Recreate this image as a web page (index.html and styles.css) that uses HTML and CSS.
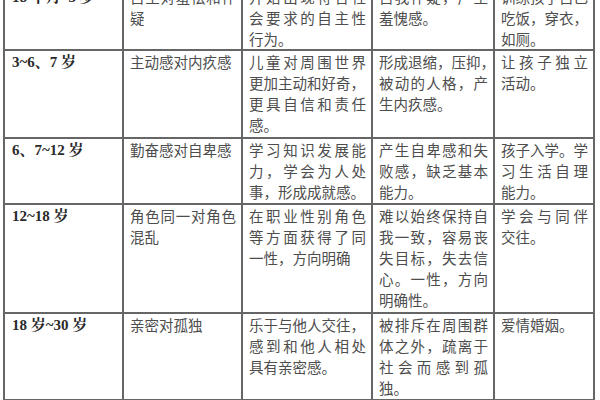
FILE: index.html
```html
<!DOCTYPE html>
<html lang="zh">
<head>
<meta charset="utf-8">
<link rel="stylesheet" href="styles.css">
</head>
<body>
<div class="page">
<table class="stages">
<colgroup>
<col class="c1"><col class="c2"><col class="c3"><col class="c4"><col class="c5">
</colgroup>
<tr class="r1">
<td class="age">18 个月~3 岁</td>
<td><span class="l j">自主对羞怯和怀</span><span class="l">疑</span></td>
<td><span class="l j">开始出现符合社</span><span class="l j">会要求的自主性</span><span class="l">行为。</span></td>
<td><span class="l j">自我怀疑，产生</span><span class="l">羞愧感。</span></td>
<td><span class="l j">训练孩子自己</span><span class="l">吃饭，穿衣，</span><span class="l">如厕。</span></td>
</tr>
<tr class="r2">
<td class="age">3~6、7 岁</td>
<td><span class="l">主动感对内疚感</span></td>
<td><span class="l j">儿童对周围世界</span><span class="l">更加主动和好奇，</span><span class="l j">更具自信和责任</span><span class="l">感。</span></td>
<td><span class="l">形成退缩，压抑，</span><span class="l j">被动的人格，产</span><span class="l">生内疚感。</span></td>
<td><span class="l j">让孩子独立</span><span class="l">活动。</span></td>
</tr>
<tr class="r3">
<td class="age">6、7~12 岁</td>
<td><span class="l">勤奋感对自卑感</span></td>
<td><span class="l j">学习知识发展能</span><span class="l j">力，学会为人处</span><span class="l">事，形成成就感。</span></td>
<td><span class="l j">产生自卑感和失</span><span class="l j">败感，缺乏基本</span><span class="l">能力。</span></td>
<td><span class="l j">孩子入学。学</span><span class="l j">习生活自理</span><span class="l">能力。</span></td>
</tr>
<tr class="r4">
<td class="age">12~18 岁</td>
<td><span class="l j">角色同一对角色</span><span class="l">混乱</span></td>
<td><span class="l j">在职业性别角色</span><span class="l j">等方面获得了同</span><span class="l">一性，方向明确</span></td>
<td><span class="l j">难以始终保持自</span><span class="l j">我一致，容易丧</span><span class="l j">失目标，失去信</span><span class="l j">心。一性，方向</span><span class="l">明确性。</span></td>
<td><span class="l j">学会与同伴</span><span class="l">交往。</span></td>
</tr>
<tr class="r5">
<td class="age">18 岁~30 岁</td>
<td><span class="l">亲密对孤独</span></td>
<td><span class="l">乐于与他人交往，</span><span class="l j">感到和他人相处</span><span class="l">具有亲密感。</span></td>
<td><span class="l j">被排斥在周围群</span><span class="l j">体之外，疏离于</span><span class="l j">社会而感到孤</span><span class="l">独。</span></td>
<td><span class="l">爱情婚姻。</span></td>
</tr>
</table>
</div>
</body>
</html>
```

FILE: styles.css
```css
html, body {
  margin: 0;
  padding: 0;
  background: #ffffff;
}
body {
  width: 600px;
  height: 400px;
  overflow: hidden;
}
.page {
  padding-left: 3px;
  margin-top: -16px;
}
.stages {
  border-collapse: collapse;
  table-layout: fixed;
  width: 592px;
  font-family: "Noto Sans CJK SC", "Noto Sans", sans-serif;
  font-size: 14.5px;
  line-height: 20.8px;
  color: #4d4d4d;
}
.c1 { width: 119px; }
.c2 { width: 119px; }
.c3 { width: 130px; }
.c4 { width: 122px; }
.c5 { width: 100px; }
.stages td {
  border: 2px solid #666666;
  vertical-align: top;
  padding: 1px 5px 0 6px;
  overflow: hidden;
}
.stages td.age {
  font-family: "Liberation Serif", "Noto Serif CJK SC", "Noto Sans CJK SC", serif;
  font-weight: bold;
  font-size: 15px;
  color: #2a2a2a;
  padding-left: 7px;
}
.r1 { height: 65px; }
.r2 { height: 88px; }
.r3 { height: 66px; }
.r4 { height: 109px; }
.r5 { height: 85px; }
.l {
  display: block;
  white-space: nowrap;
  text-align: left;
}
.l.j {
  text-align: justify;
  text-align-last: justify;
}
```
